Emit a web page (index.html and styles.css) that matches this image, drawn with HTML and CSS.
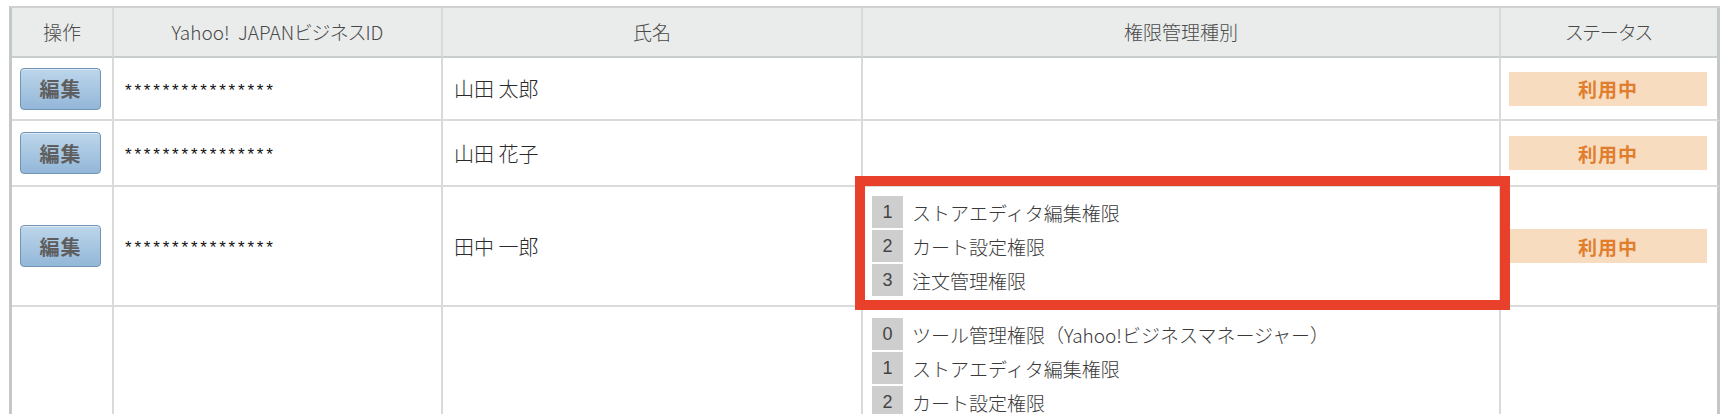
FILE: index.html
```html
<!DOCTYPE html>
<html lang="ja">
<head>
<meta charset="utf-8">
<title>ユーザー一覧</title>
<link rel="stylesheet" href="styles.css">
</head>
<body>
<div class="board">
  <div class="grid">
    <div class="cell th">操作</div>
    <div class="cell th">Yahoo!&nbsp; JAPANビジネスID</div>
    <div class="cell th">氏名</div>
    <div class="cell th">権限管理種別</div>
    <div class="cell th last">ステータス</div>

    <div class="cell op"><button class="edit">編集</button></div>
    <div class="cell id">****************</div>
    <div class="cell name">山田 太郎</div>
    <div class="cell perm"></div>
    <div class="cell status last"><span class="badge">利用中</span></div>

    <div class="cell op"><button class="edit">編集</button></div>
    <div class="cell id">****************</div>
    <div class="cell name">山田 花子</div>
    <div class="cell perm"></div>
    <div class="cell status last"><span class="badge">利用中</span></div>

    <div class="cell op"><button class="edit">編集</button></div>
    <div class="cell id">****************</div>
    <div class="cell name">田中 一郎</div>
    <div class="cell perm">
      <ul class="plist">
        <li><span class="num">1</span><span class="ptxt">ストアエディタ編集権限</span></li>
        <li><span class="num">2</span><span class="ptxt">カート設定権限</span></li>
        <li><span class="num">3</span><span class="ptxt">注文管理権限</span></li>
      </ul>
    </div>
    <div class="cell status last"><span class="badge">利用中</span></div>

    <div class="cell op"></div>
    <div class="cell id"></div>
    <div class="cell name"></div>
    <div class="cell perm top">
      <ul class="plist">
        <li><span class="num">0</span><span class="ptxt">ツール管理権限（Yahoo!ビジネスマネージャー）</span></li>
        <li><span class="num">1</span><span class="ptxt">ストアエディタ編集権限</span></li>
        <li><span class="num">2</span><span class="ptxt">カート設定権限</span></li>
      </ul>
    </div>
    <div class="cell status last"></div>
  </div>
  <div class="highlight"></div>
</div>
</body>
</html>
```

FILE: styles.css
```css
html, body {
  margin: 0;
  padding: 0;
  background: #ffffff;
}

body {
  font-family: "Noto Sans CJK JP", "Noto Sans", sans-serif;
  color: #333333;
}

.board {
  position: relative;
  margin: 6px 0 0 9px;
  width: 1711px;
}

.grid {
  display: grid;
  grid-template-columns: 102px 329px 420px 638px 219px;
  grid-template-rows: 50px 63px 66px 120px 120px;
  border-top: 2px solid #d0d2d2;
  border-left: 3px solid #c4c8c8;
}

.cell {
  box-sizing: border-box;
  border-right: 2px solid #d9dbdb;
  border-bottom: 2px solid #d9dbdb;
  display: flex;
  align-items: center;
  min-width: 0;
}

.cell.last {
  border-right: 3px solid #c4c8c8;
}

.th {
  background: #e9eceb;
  border-bottom-color: #c9cdcd;
  justify-content: center;
  font-size: 19px;
  font-weight: 300;
  color: #4a4a4a;
  font-feature-settings: "palt";
  padding-bottom: 2px;
}

.op {
  padding-left: 8px;
}

.edit {
  width: 81px;
  height: 42px;
  padding: 0;
  border: 1px solid #7193b6;
  border-radius: 4px;
  background: linear-gradient(#bdd6eb, #93b7d8);
  box-shadow: inset 0 1px 0 rgba(255,255,255,0.5);
  font-family: "Noto Sans CJK JP", sans-serif;
  font-size: 20px;
  font-weight: 700;
  letter-spacing: 1px;
  color: #5e5e5e;
  cursor: pointer;
}

.id {
  padding-left: 11px;
  font-family: "Liberation Sans", Arial, sans-serif;
  font-size: 17px;
  letter-spacing: 2.8px;
  color: #111111;
  padding-top: 4px;
}

.name {
  padding-left: 11px;
  font-size: 20px;
  font-weight: 300;
  color: #2a2a2a;
}

.perm {
  padding-left: 9px;
}

.perm.top {
  align-items: flex-start;
  padding-top: 11px;
}

.plist {
  list-style: none;
  margin: 0;
  padding: 0;
  display: flex;
  flex-direction: column;
  gap: 2px;
}

.plist li {
  display: flex;
  align-items: center;
  height: 32px;
}

.num {
  width: 31px;
  height: 32px;
  background: #cecece;
  display: flex;
  align-items: center;
  justify-content: center;
  font-family: "Liberation Sans", Arial, sans-serif;
  font-size: 18px;
  color: #444444;
}

.ptxt {
  margin-left: 9px;
  font-size: 19px;
  font-weight: 300;
  color: #3a3a3a;
  white-space: nowrap;
}

.status {
  padding-left: 8px;
}

.badge {
  width: 198px;
  height: 34px;
  background: #f8dcbf;
  display: flex;
  align-items: center;
  justify-content: center;
  font-size: 19px;
  font-weight: 700;
  letter-spacing: 1px;
  color: #e07e2e;
}

.highlight {
  position: absolute;
  left: 846px;
  top: 170px;
  width: 655px;
  height: 134px;
  box-sizing: border-box;
  border: 10px solid #e8402a;
  pointer-events: none;
}
```
